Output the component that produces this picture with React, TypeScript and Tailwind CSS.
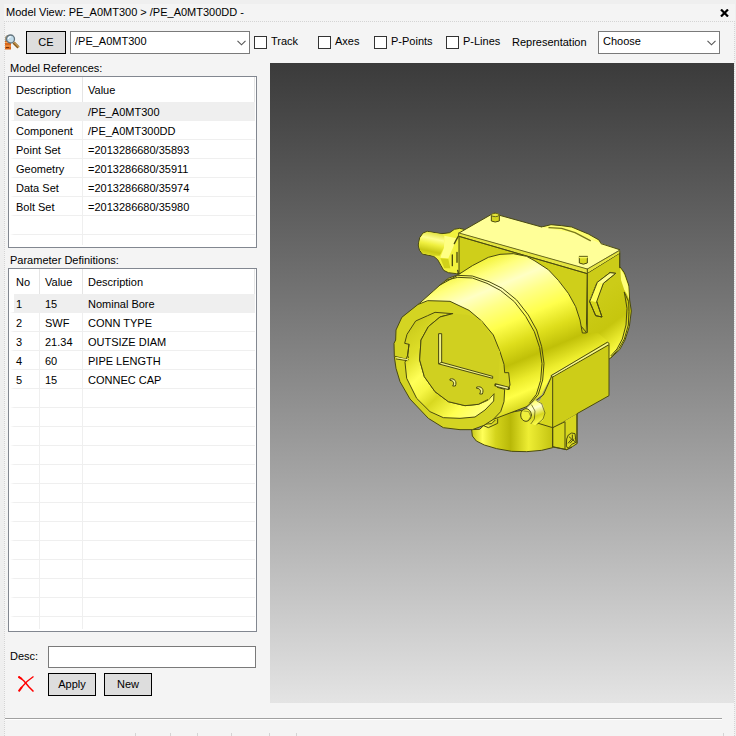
import { useState } from 'react'
import type { ReactNode } from 'react'

const references = [
  ['Category', '/PE_A0MT300'],
  ['Component', '/PE_A0MT300DD'],
  ['Point Set', '=2013286680/35893'],
  ['Geometry', '=2013286680/35911'],
  ['Data Set', '=2013286680/35974'],
  ['Bolt Set', '=2013286680/35980'],
]

const parameters = [
  ['1', '15', 'Nominal Bore'],
  ['2', 'SWF', 'CONN TYPE'],
  ['3', '21.34', 'OUTSIZE DIAM'],
  ['4', '60', 'PIPE LENGTH'],
  ['5', '15', 'CONNEC CAP'],
]

interface GridProps {
  label: string
  columns: { title: string; width: string }[]
  rows: string[][]
  emptyRows: number
  tail: string
}

function DataGrid({ label, columns, rows, emptyRows, tail }: GridProps) {
  const [selected, setSelected] = useState(0)
  const all = [...rows, ...Array.from({ length: emptyRows }, () => columns.map(() => ''))]
  const last = columns.length - 1

  return (
    <div className="border border-[#828790] bg-white px-px pb-[2px]">
      <table aria-label={label} className="w-full table-fixed border-separate border-spacing-0 text-left">
        <thead>
          <tr className="h-[25px]">
            {columns.map((c, i) => (
              <th
                key={c.title}
                className={`${c.width} border-r border-[#e5e5e5] p-0 pt-[2px] font-normal ${i === 0 ? 'pl-[6px]' : 'pl-[5px]'}`}
              >
                {c.title}
              </th>
            ))}
          </tr>
        </thead>
        <tbody>
          {all.map((row, r) => (
            <tr key={r} onClick={() => r < rows.length && setSelected(r)} className="h-[19px]">
              {row.map((cell, i) => (
                <td
                  key={i}
                  className={`border-b border-[#efefef] p-0 pt-[2px] ${
                    i === 0 ? 'border-l-4 border-l-white pl-[2px]' : 'pl-[5px]'
                  } ${i < last ? 'border-r' : ''} ${r === selected ? 'bg-[#efefef]' : ''}`}
                >
                  {cell}
                </td>
              ))}
            </tr>
          ))}
          <tr className={tail}>
            {columns.map((c, i) => (
              <td key={c.title} className={`p-0 ${i < last ? 'border-r border-[#efefef]' : ''}`} />
            ))}
          </tr>
        </tbody>
      </table>
    </div>
  )
}

function Combo({ label, options, className }: { label: string; options: string[]; className: string }) {
  return (
    <div className={`relative h-[23px] ${className}`}>
      <select
        aria-label={label}
        className="h-full w-full appearance-none border border-[#7a7a7a] bg-white pb-[2px] pl-1 outline-none"
      >
        {options.map(o => (
          <option key={o}>{o}</option>
        ))}
      </select>
      <svg className="pointer-events-none absolute top-[9px] right-1 h-[6px] w-[9px]" viewBox="0 0 9 6" fill="none" stroke="#555" strokeWidth="1.1">
        <path d="M.5 .8 4.5 4.8 8.5 .8" />
      </svg>
    </div>
  )
}

function Check({ children, className }: { children: ReactNode; className: string }) {
  return (
    <label className={`flex items-center gap-1 ${className}`}>
      <input
        type="checkbox"
        className="size-[13px] shrink-0 appearance-none border border-[#333] bg-white checked:bg-[#333]"
      />
      <span className="pb-[2px] whitespace-nowrap">{children}</span>
    </label>
  )
}

function PushButton({ children, className }: { children: ReactNode; className: string }) {
  return (
    <button className={`h-[23px] border border-black bg-[#dddddd] text-center active:bg-[#ccc] ${className}`}>
      {children}
    </button>
  )
}

function FindIcon() {
  return (
    <svg className="h-[17px] w-[15px] shrink-0 pb-px" viewBox="0 0 15 16">
      <path d="M0 7h6v8.500H0z" fill="#d9661a" />
      <path d="M0 8.500h5M0 12h6" stroke="#f7a85a" />
      <path d="M1 13.500h3" stroke="#7a3206" />
      <path d="M0 3 2 1h4v6H0z" fill="#a8987c" />
      <path d="m8.500 8.500 5 5" stroke="#8a5a1e" strokeWidth="3" />
      <path d="m8.800 8.200 5 5" stroke="#e8c070" />
      <circle cx="5.500" cy="5" r="4" fill="#c2dcea" stroke="#65757e" strokeWidth="1.300" />
      <path d="M3.200 5a2.300 2.300 0 0 1 2.800-2.200" stroke="#fff" fill="none" />
    </svg>
  )
}

// Shaded solid of the transmitter housing
function Model() {
  return (
    <svg
      role="img"
      aria-label="3D model"
      className="block size-[255px]"
      viewBox="0 0 765 765"
      stroke="#4a4a10"
      strokeWidth="3"
      strokeLinejoin="round"
      strokeLinecap="round"
      fill="none"
    >
      <defs>
        <linearGradient id="barrel" gradientUnits="userSpaceOnUse" x1="105" y1="248" x2="282" y2="667">
          <stop offset="0" stopColor="#f4f440" />
          <stop offset=".08" stopColor="#ffff7c" />
          <stop offset=".19" stopColor="#ffffc4" />
          <stop offset=".3" stopColor="#ffff88" />
          <stop offset=".44" stopColor="#ffff4c" />
          <stop offset=".58" stopColor="#dede1c" />
          <stop offset=".7" stopColor="#c0c008" />
          <stop offset=".82" stopColor="#ecec2c" />
          <stop offset=".9" stopColor="#ffff46" />
          <stop offset="1" stopColor="#d6d61e" />
        </linearGradient>
        <linearGradient id="bore" gradientUnits="userSpaceOnUse" x1="70" y1="370" x2="300" y2="620">
          <stop offset="0" stopColor="#cccc1c" />
          <stop offset=".2" stopColor="#dede28" />
          <stop offset=".38" stopColor="#ffff58" />
          <stop offset=".5" stopColor="#f6f644" />
          <stop offset=".62" stopColor="#d8d820" />
          <stop offset=".82" stopColor="#ffff50" />
          <stop offset="1" stopColor="#ffff80" />
        </linearGradient>
        <linearGradient id="foot" gradientUnits="userSpaceOnUse" x1="258" y1="0" x2="505" y2="0">
          <stop offset="0" stopColor="#c4c414" />
          <stop offset=".14" stopColor="#ffff58" />
          <stop offset=".3" stopColor="#d4d41c" />
          <stop offset=".48" stopColor="#b8b808" />
          <stop offset=".7" stopColor="#eeee34" />
          <stop offset="1" stopColor="#c2c210" />
        </linearGradient>
        <linearGradient id="plug" gradientUnits="userSpaceOnUse" x1="150" y1="76" x2="132" y2="160">
          <stop offset="0" stopColor="#d8d824" />
          <stop offset=".3" stopColor="#ffff90" />
          <stop offset=".5" stopColor="#f0f040" />
          <stop offset=".75" stopColor="#c8c814" />
          <stop offset="1" stopColor="#e8e830" />
        </linearGradient>
        <linearGradient id="knob" gradientUnits="userSpaceOnUse" x1="440" y1="590" x2="465" y2="655">
          <stop offset="0" stopColor="#ffff60" />
          <stop offset=".3" stopColor="#ffffd0" />
          <stop offset=".65" stopColor="#d8d820" />
          <stop offset="1" stopColor="#ffff50" />
        </linearGradient>
        <linearGradient id="rear" gradientUnits="userSpaceOnUse" x1="612" y1="291" x2="714" y2="427">
          <stop offset="0" stopColor="#cccc18" />
          <stop offset=".55" stopColor="#c6c60e" />
          <stop offset=".8" stopColor="#e8e82c" />
          <stop offset="1" stopColor="#ffff48" />
        </linearGradient>
      </defs>

      {/* foot */}
      <path
        d="M260 675 262 693 274 708 298 720 335 731 380 739 425 740 470 736 503 728V600L330 630 285 672Z"
        fill="url(#foot)"
      />

      {/* rear cover */}
      <path d="M470 66 498 59 530 62 560 66 610 87 642 105 648 116 670 124 600 160Z" fill="#ffff70" />
      <path
        d="M704 140V184L718 203 731 240 734 285 739 318 733 365 720 405 704 434 676 460 560 520 560 300 607 205Z"
        fill="url(#rear)"
      />
      <path d="M706 190 718 209 730 244 732 283 726 268 718 255 708 225Z" fill="#ffff78" stroke="none" />
      <path d="M718 262 726 310 723 360 712 402 696 432 678 452M718 262 731 290 732 320 730 360 718 402 702 430 678 458" />

      {/* cable plug */}
      <path
        d="M100 119 104 98 114 84 127 79 168 86 180 85 194 83 208 73 224 70 245 75 240 205 214 206 190 203 176 196 168 182 158 164 146 154 112 147 104 136Z"
        fill="#f2f23e"
      />
      <path
        d="M102 119 106 99 115 86 128 81 174 88 178 100 176 130 164 152 146 152 112 145 105 134Z"
        fill="url(#plug)"
        stroke="none"
      />
      <path d="M178 92 214 100 205 125 190 160 166 158 177 128Z" fill="#ffff84" stroke="none" />
      <path d="M166 160 190 162 196 190 178 190Z" fill="#d2d21a" stroke="none" />
      <path d="M222 90 213 106 208 116M202 150v32M216 142v30M218 196 220 204" strokeWidth="4" />

      {/* junction box */}
      <path d="M222 88V206L350 180 500 260 604 382 607 205Z" fill="#cfcf1a" />
      <path
        d="M222 84 316 30 330 24 344 31 470 66 500 72 560 82 640 112 704 134 607 192Z"
        fill="#ffff98"
        stroke="none"
      />
      <path d="M222 84 316 30 330 24 344 31 470 66M648 116 704 134" />
      <path d="M492 68 530 70 570 83 616 107" stroke="#77771c" strokeWidth="4" />
      <path d="M222 84 607 192 704 136V146L607 206 222 94Z" fill="#e4e440" stroke="#6a6a1c" />
      <path d="M222 94 607 206 704 146" />
      <path d="M607 192V206" />
      <path d="M607 206V340L604 384 650 360 700 280 704 146Z" fill="url(#rear)" stroke="none" />
      <path d="M607 206V382M704 146V188" />

      {/* barrel */}
      <path
        d="M100 298 145 258 165 240 190 220 220 209 262 182 310 157 345 148 385 146 425 154 450 168 490 194 520 226 550 265 572 305 585 345 592 384 604 384 640 385 672 412 500 510 470 570 425 605 325 643 220 600Z"
        fill="url(#barrel)"
        stroke="none"
      />
      <path d="M100 298 145 258 165 240 190 220 220 209 262 182 310 157 345 148 385 146 425 154 450 168 490 194 520 226 550 265 572 305 585 345 592 384H604V382" />
      <path
        d="M165 240 218 211 262 213 312 230 352 250 395 285 430 330 455 375 470 425 477 475 473 525 460 568 440 592 425 605M182 226 218 217 262 219 306 235 346 256 388 290 422 334 448 380 464 428 471 476 467 526 454 568 434 594"
      />
      <path d="M425 605 325 643" />

      {/* mounting plate */}
      <path d="M503 510 496 520 474 568 462 590 478 625 460 655 503 668Z" fill="#d6d61e" stroke="none" />
      <path d="M500 514 475 570 455 585M460 655 503 668" />
      <path d="M503 668V725L545 734 562 725 576 716V626Z" fill="#d6d61e" />
      <path d="M503 512 668 412 672 416V572L576 626 503 668Z" fill="#cdcd18" stroke="none" />
      <path d="M503 668V516M672 420V572L576 626V714" />
      <path d="M503 516 672 419" />
      <path d="M503 512 670 415" stroke="#f6f69a" strokeWidth="4" />
      <path d="M498 512 668 411 672 416" />
      <path d="M503 668 540 650V732" />
      <path d="M503 668V726L545 734 560 727" />
      <path d="M544 724 545 702 550 690 560 684 570 686 573 712 560 718 552 728Z" fill="#dada22" />
      <path d="M553 696 560 702 550 714M562 690V704L570 710M556 714 566 702" />

      {/* knob */}
      <path d="M425 610 450 586 462 588 474 600 480 624 474 646 450 660 425 650Z" fill="url(#knob)" stroke="none" />
      <path d="M456 588 470 596 480 624 474 642 456 658M440 600 450 618 448 642 438 656" strokeWidth="2" />
      <ellipse cx="423" cy="630" rx="16" ry="19" fill="#f0f03c" />
      <path d="M416 618 431 620 437 634 430 646" stroke="#77771c" strokeWidth="2" />

      {/* catch under the front cover */}
      <path d="M296 662 310 668 338 655 338 642M292 658 320 656 330 646" />

      {/* front cover */}
      <path
        d="M100 298 128 287 165 288 195 289 252 316 290 348 325 390 345 440 357 478 359 503 371 503 375 540 370 551 333 541 333 546 359 553 357 590 347 620 325 643 297 661 262 674 225 674 175 668 130 640 75 582 45 530 33 490 28 455 27 415 32 405 33 375 50 338Z"
        fill="#d4d422"
      />
      <path
        d="M203 326 150 322 128 332 92 348 66 388 59 415 72 418 68 450 60 472 65 520 95 580 135 620 175 638 225 640 270 636 300 615 326 588 327 566 310 585 280 598 240 602 190 590 150 560 118 515 104 465 108 405 130 365 165 336Z"
        fill="url(#bore)"
      />
      <path
        d="M203 326 165 336 130 365 108 405 104 465 118 515 150 560 190 590 240 602 280 598 310 585 328 562 340 540 345 440 290 348 250 330Z"
        fill="#d0d020"
        stroke="none"
      />
      <path d="M203 326 165 336 130 365 108 405 104 465 118 515 150 560 190 590 240 602 280 598 308 584" />
      <path d="M30 454 70 464M34 462 66 467" stroke="#55550f" />
      <path d="M35 458 68 464" stroke="#f2f2a0" />
      <path d="M72 418 68 450 70 458" />
      <path d="M333 540 370 550" stroke="#4a4a10" strokeWidth="10" />
      <path d="M335 541 367 549" stroke="#f2f2a0" strokeWidth="4" />

      {/* display frame and buttons */}
      <path d="M162 386H170V472L323 514V520L162 477Z" fill="#f0f088" />
      <path d="M162 476 170 472" />
      <path d="M196 522C208 518 217 530 211 543L203 543C209 534 205 527 196 526Z" fill="#f4f490" />
      <path d="M276 546C290 542 298 553 292 567L284 567C289 558 286 550 276 550Z" fill="#f4f490" />

      {/* side handle */}
      <path d="M637 232 675 203 692 205 655 235 634 286 651 336 632 332 614 290Z" fill="#d6d61e" />
      <path d="M637 232 675 203 692 205 655 235 634 290 614 286Z" fill="#ffff8c" stroke="none" />
      <path d="M637 232 655 235 634 290 614 288Z" fill="#ffff5c" stroke="none" />
      <path d="M675 203 692 205 655 235 635 290 651 336 632 332 614 290 637 232 675 203" />

      {/* bolts */}
      <path d="M319 32V48Q330 54 343 48V32Z" fill="#d4d420" />
      <ellipse cx="331" cy="30" rx="12" ry="5" fill="#e6e63c" stroke="#6a6a1c" />
      <path d="M583 156V174Q595 181 607 174V156Z" fill="#d8d822" />
      <path d="M584 157H606" stroke="#f6f65a" strokeWidth="5" />
      <path d="M583 154H607" stroke="#6a6a1c" />
    </svg>
  )
}

export default function App() {
  const [desc, setDesc] = useState('')

  return (
    <div className="flex min-h-screen flex-col bg-[#efefef] pt-1 pr-px pl-1 font-['Liberation_Sans',Arial,sans-serif] text-[11px] leading-[13px] text-black">
      <header className="flex h-[17px] items-center justify-between bg-[#f4f4f4] pr-[6px] pl-[2px]">
        <h1>Model View: PE_A0MT300 &gt; /PE_A0MT300DD -</h1>
        <button aria-label="Close">
          <svg className="h-2 w-[9px]" viewBox="0 0 9 8" stroke="#000" strokeWidth="2.200">
            <path d="m1 .5 7 7M8 .5l-7 7" />
          </svg>
        </button>
      </header>

      <main className="flex flex-1 flex-col border-x border-t border-dotted border-[#d4d4d4] bg-[#f4f4f4]">
        <div className="flex h-[41px] items-center">
          <FindIcon />
          <PushButton className="mr-1 ml-[6px] w-10">CE</PushButton>
          <Combo label="Element" options={['/PE_A0MT300']} className="mr-1 w-[180px]" />
          <Check className="w-16">Track</Check>
          <Check className="w-14">Axes</Check>
          <Check className="w-[72px]">P-Points</Check>
          <Check className="w-[66px]">P-Lines</Check>
          <span className="w-[86px]">Representation</span>
          <Combo label="Representation" options={['Choose']} className="w-[122px]" />
        </div>

        <div className="flex">
          <section className="w-[265px] shrink-0 pr-[13px] pb-[7px] pl-[3px]">
            <h2 className="mb-[2px] pl-[2px] leading-[11px]">Model References:</h2>
            <DataGrid
              label="Model References"
              columns={[
                { title: 'Description', width: 'w-[73px]' },
                { title: 'Value', width: 'w-auto' },
              ]}
              rows={references}
              emptyRows={1}
              tail="h-[10px]"
            />

            <h2 className="mt-[7px] mb-[2px] pl-[2px] leading-[11px]">Parameter Definitions:</h2>
            <DataGrid
              label="Parameter Definitions"
              columns={[
                { title: 'No', width: 'w-[30px]' },
                { title: 'Value', width: 'w-[43px]' },
                { title: 'Description', width: 'w-auto' },
              ]}
              rows={parameters}
              emptyRows={12}
              tail="h-[12px]"
            />

            <div className="mt-[14px] flex items-center pr-px">
              <label htmlFor="desc" className="w-10 shrink-0 pb-[2px] pl-[2px]">
                Desc:
              </label>
              <input
                id="desc"
                value={desc}
                onChange={e => setDesc(e.target.value)}
                className="h-[22px] w-full border border-[#7a7a7a] bg-white px-1 outline-none"
              />
            </div>

            <div className="mt-[5px] flex items-center gap-2">
              <button aria-label="Delete" className="flex w-8 justify-center pb-[2px] pl-[3px]">
                <svg className="size-4" viewBox="0 0 16 16" fill="none" stroke="#f00">
                  <path d="M.5 .5 6 5l5 6 4.500 4.500" strokeWidth="1.500" />
                  <path d="M.5 .8 4 3" strokeWidth="2" />
                  <path d="M15.500 .5 9 5.500 3 12 .8 15.500" strokeWidth="1.300" />
                  <path d="M4 11 .8 15.200" strokeWidth="2" />
                </svg>
              </button>
              <PushButton className="w-12">Apply</PushButton>
              <PushButton className="w-12">New</PushButton>
            </div>
          </section>

          <section className="flex-1 overflow-hidden bg-linear-to-b from-[#3b3b3b] to-[#e4e4e4] pt-[142px] pl-[115px]">
            <Model />
          </section>
        </div>

        <div className="mt-[15px] mr-3 border-t border-b border-t-[#a0a0a0] border-b-white" />
        <div className="mt-[13px] flex h-[3px] pl-[130px]">
          <i className="w-[35px] border-l border-[#d4d4d4]" />
          <i className="w-[27px] border-l border-[#d4d4d4]" />
          <i className="w-[34px] border-l border-[#d4d4d4]" />
          <i className="w-[38px] border-l border-[#d4d4d4]" />
          <i className="w-[27px] border-l border-[#d4d4d4]" />
          <i className="mr-[10px] flex-1 border-x border-[#d4d4d4]" />
        </div>
      </main>
    </div>
  )
}
